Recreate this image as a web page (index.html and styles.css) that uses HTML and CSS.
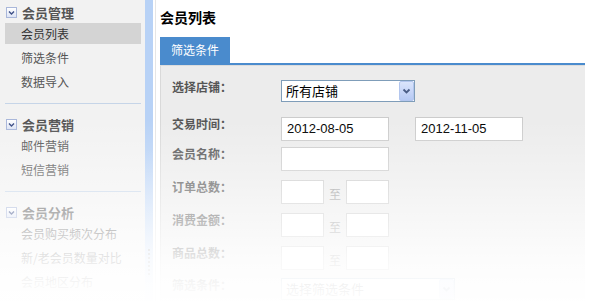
FILE: index.html
```html
<!DOCTYPE html>
<html lang="zh-CN">
<head>
<meta charset="utf-8">
<title>会员列表</title>
<link rel="stylesheet" href="styles.css">
</head>
<body>
<aside class="sidebar">
  <section class="nav-section">
    <div class="nav-head"><span class="toggle"><svg viewBox="0 0 11 11" width="11" height="11"><path d="M3 4.5 L5.5 7 L8 4.5" fill="none" stroke="#3d4f86" stroke-width="1.4"/></svg></span>会员管理</div>
    <div class="nav-item active">会员列表</div>
    <div class="nav-item">筛选条件</div>
    <div class="nav-item">数据导入</div>
  </section>
  <section class="nav-section">
    <div class="nav-head"><span class="toggle"><svg viewBox="0 0 11 11" width="11" height="11"><path d="M3 4.5 L5.5 7 L8 4.5" fill="none" stroke="#3d4f86" stroke-width="1.4"/></svg></span>会员营销</div>
    <div class="nav-item">邮件营销</div>
    <div class="nav-item">短信营销</div>
  </section>
  <section class="nav-section last">
    <div class="nav-head"><span class="toggle"><svg viewBox="0 0 11 11" width="11" height="11"><path d="M3 4.5 L5.5 7 L8 4.5" fill="none" stroke="#3d4f86" stroke-width="1.4"/></svg></span>会员分析</div>
    <div class="nav-item">会员购买频次分布</div>
    <div class="nav-item">新/老会员数量对比</div>
    <div class="nav-item">会员地区分布</div>
  </section>
</aside>
<div class="splitter"><div class="grip"><i></i><i></i><i></i><i></i><i></i><i></i><i></i></div></div>
<main class="main">
  <h1 class="title">会员列表</h1>
  <div class="tabs"><div class="tab">筛选条件</div></div>
  <div class="panel">
    <div class="row row-store">
      <label class="label">选择店铺：</label>
      <div class="select"><span class="select-text">所有店铺</span><span class="select-btn"><svg viewBox="0 0 13 18" width="13" height="18"><path d="M3.5 7.5 L6.5 10.5 L9.5 7.5" fill="none" stroke="#4a5d86" stroke-width="1.8"/></svg></span></div>
    </div>
    <div class="row row-date">
      <label class="label">交易时间：</label>
      <div class="input wide">2012-08-05</div>
      <div class="input wide second">2012-11-05</div>
    </div>
    <div class="row">
      <label class="label">会员名称：</label>
      <div class="input wide"></div>
    </div>
    <div class="row">
      <label class="label">订单总数：</label>
      <div class="input small"></div><span class="to">至</span><div class="input small"></div>
    </div>
    <div class="row">
      <label class="label">消费金额：</label>
      <div class="input small"></div><span class="to">至</span><div class="input small"></div>
    </div>
    <div class="row row-goods">
      <label class="label">商品总数：</label>
      <div class="input small"></div><span class="to">至</span><div class="input small"></div>
    </div>
    <div class="row">
      <label class="label">筛选条件：</label>
      <div class="select long"><span class="select-text">选择筛选条件</span><span class="select-btn"><svg viewBox="0 0 13 18" width="13" height="18"><path d="M3.5 7.5 L6.5 10.5 L9.5 7.5" fill="none" stroke="#4a5d86" stroke-width="1.8"/></svg></span></div>
    </div>
  </div>
</main>
</body>
</html>
```
FILE: styles.css
```css
* { box-sizing: border-box; }
html, body { margin: 0; padding: 0; }
body {
  width: 602px;
  height: 301px;
  overflow: hidden;
  position: relative;
  display: flex;
  background: #fff;
  font-family: "Noto Sans CJK SC", "Liberation Sans", sans-serif;
  font-size: 12px;
  color: #555;
}
body::after {
  content: "";
  position: absolute;
  left: 0; top: 0; right: 0; bottom: 0;
  pointer-events: none;
  background: linear-gradient(to bottom,
    rgba(255,255,255,0) 0px,
    rgba(255,255,255,0) 120px,
    rgba(255,255,255,0.16) 150px,
    rgba(255,255,255,0.55) 212px,
    rgba(255,255,255,0.85) 259px,
    rgba(255,255,255,0.95) 285px,
    rgba(255,255,255,0.98) 301px);
}

/* sidebar */
.sidebar {
  width: 145px;
  flex: none;
  background: #f2f2f2;
  padding: 1px 4px 0 5px;
  overflow: hidden;
}
.nav-section {
  padding-bottom: 8px;
  border-bottom: 1px solid #c6d5e8;
  margin-top: 9px;
}
.nav-section:first-child { margin-top: 0; }
.nav-section.last { border-bottom: none; }
.nav-head {
  height: 22px;
  display: flex;
  align-items: center;
  font-size: 13px;
  font-weight: bold;
  color: #555;
}
.toggle {
  width: 11px;
  height: 11px;
  margin: 0 5px 0 1px;
  border: 1px solid #a9b7da;
  background: linear-gradient(#ffffff, #dde4f5);
  display: flex;
  align-items: center;
  justify-content: center;
}
.toggle svg { display: block; flex: none; }
.nav-item {
  height: 21px;
  line-height: 21px;
  margin-bottom: 3px;
  padding-left: 16px;
  color: #555;
}
.nav-item.active { background: #d4d4d4; color: #333; }

/* splitter */
.splitter {
  width: 8px;
  flex: none;
  background: linear-gradient(to bottom, #b8d2f6 0, #b8d2f6 150px, #dde9fa 301px);
  position: relative;
}
.grip {
  position: absolute;
  left: 3px;
  top: 249px;
  display: flex;
  flex-direction: column;
  gap: 2px;
}
.grip i { display: block; width: 2px; height: 2px; background: #aaa; }

/* main */
.main {
  width: 432px;
  flex: none;
  margin-left: 2px;
  padding-left: 4px;
  border-left: 1px solid #e6e6e6;
  display: flex;
  flex-direction: column;
  overflow: hidden;
}
.title {
  flex: none;
  margin: 0;
  height: 37px;
  line-height: 34px;
  font-size: 14px;
  font-weight: bold;
  color: #000;
}
.tabs {
  flex: none;
  width: 425px;
  height: 28px;
  border-bottom: 2px solid #4a8bcd;
  display: flex;
}
.tab {
  width: 70px;
  height: 26px;
  line-height: 26px;
  padding-left: 11px;
  background: #4a8bcd;
  color: #fff;
  font-size: 12px;
}
.panel {
  width: 425px;
  flex: 1 0 auto;
  background: #ececec;
  border-top: 1px solid #dcdcdc;
  border-left: 1px solid #d9d9d9;
  padding: 14px 0 0 11px;
}
.row {
  display: flex;
  align-items: flex-start;
  margin-bottom: 9px;
}
.row-store { margin-bottom: 15px; }
.row-date { margin-bottom: 6px; }
.row-goods { margin-bottom: 8px; }
.label {
  width: 109px;
  flex: none;
  padding-top: 0;
  line-height: 13px;
  font-weight: bold;
  color: #555;
  font-size: 12px;
}
.input {
  flex: none;
  height: 24px;
  background: #fff;
  border: 1px solid #cccccc;
  padding-left: 5px;
  line-height: 22px;
  font-family: "Liberation Sans", Arial, sans-serif;
  font-size: 13px;
  color: #000;
}
.input.wide { width: 108px; }
.input.second { margin-left: 26px; }
.input.small { width: 43px; }
.to {
  width: 22px;
  flex: none;
  text-align: center;
  align-self: flex-end;
  line-height: 16px;
  padding-bottom: 2px;
  color: #999;
  font-size: 12px;
}
.select {
  flex: none;
  width: 134px;
  height: 22px;
  border: 1px solid #7f9db9;
  background: #fff;
  display: flex;
  justify-content: space-between;
  align-items: center;
  padding: 0 0 0 4px;
  color: #000;
  font-size: 13px;
}
.select.long { width: 174px; }
.select-text { line-height: 20px; }
.select-btn {
  width: 15px;
  height: 20px;
  border: 1px solid #b3c6ee;
  border-radius: 2px;
  background: linear-gradient(#dbe5fc, #b6c9f4);
  display: flex;
  align-items: center;
  justify-content: center;
}
.select-btn svg { display: block; }
```
